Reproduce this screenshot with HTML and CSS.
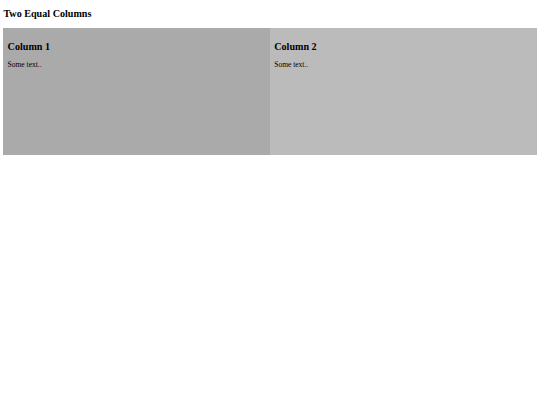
FILE: index.html
```html
<!DOCTYPE html>
<html lang="en">
<head>
<meta charset="utf-8">
<title>Two Equal Columns</title>
<link rel="stylesheet" href="styles.css">
</head>
<body>
<main class="page">
  <h2 class="title">Two Equal Columns</h2>
  <div class="row">
    <div class="column column-a">
      <h2 class="column-title">Column 1</h2>
      <p class="column-text">Some text..</p>
    </div>
    <div class="column column-b">
      <h2 class="column-title">Column 2</h2>
      <p class="column-text">Some text..</p>
    </div>
  </div>
</main>
</body>
</html>
```

FILE: styles.css
```css
* {
  box-sizing: border-box;
}

body {
  margin: 0;
  font-family: "Liberation Serif", "Times New Roman", serif;
  color: #000;
  background: #fff;
}

.page {
  padding: 8.4px 3.375px 0;
}

.title {
  font-size: 10.125px;
  line-height: 11.63px;
  font-weight: bold;
  margin: 0 0 8.4px;
}

/* two columns sharing the row equally */
.row {
  display: flex;
}

.column {
  flex: 1 1 0;
  height: 126.6px;
  padding: 4.22px;
}

.column-a {
  background: #aaa;
}

.column-b {
  background: #bbb;
}

.column-title {
  font-size: 10.125px;
  line-height: 11.63px;
  font-weight: bold;
  margin: 8.4px 0;
}

.column-text {
  font-size: 7.5px;
  line-height: 7.76px;
  margin: 6.75px 0;
}
```
